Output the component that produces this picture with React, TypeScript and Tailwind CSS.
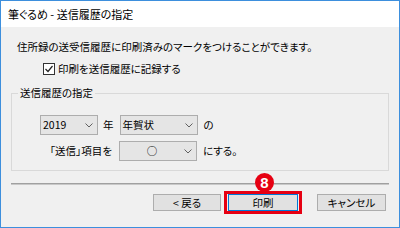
import React from "react";

const font = "font-['Noto_Sans_CJK_JP','Noto_Sans',sans-serif] [font-feature-settings:'palt']";

function Chevron() {
  return (
    <svg width="8" height="5" viewBox="0 0 8 5" className="shrink-0">
      <polyline points="0.5,0.5 4,4 7.5,0.5" fill="none" stroke="#606060" strokeWidth="1" />
    </svg>
  );
}

function Select({ value, width, center }: { value: string; width: string; center?: boolean }) {
  return (
    <div className={`${width} h-[20px] flex items-center bg-[#e5e5e5] border border-[#adadad] pr-[4px]`}>
      <span className={`flex-1 ${center ? "text-center" : "pl-[2px]"}`}>{value}</span>
      <Chevron />
    </div>
  );
}

function Button({ label, width, primary }: { label: string; width: string; primary?: boolean }) {
  return (
    <div
      className={`${width} h-[17px] flex items-center justify-center bg-[#e1e1e1] border ${
        primary ? "border-[#0078d7]" : "border-[#adadad]"
      }`}
    >
      {label}
    </div>
  );
}

export default function App() {
  return (
    <div className={`w-[400px] h-[228px] flex flex-col border border-[#3d8fdd] text-[10.5px] leading-[16px] text-black ${font}`}>
      {/* title bar */}
      <div className="h-[26px] shrink-0 bg-white flex items-center pl-[7px] text-[11px]">
        筆ぐるめ - 送信履歴の指定
      </div>

      <div className="flex-1 bg-[#f0f0f0] flex flex-col">
        <p className="mt-[12px] pl-[16px]">住所録の送受信履歴に印刷済みのマークをつけることができます。</p>

        <div className="mt-[6px] ml-[42px] flex items-center gap-[3px]">
          <div className="w-[12px] h-[12px] bg-white border border-[#333] flex items-center justify-center">
            <svg width="10" height="10" viewBox="0 0 10 10">
              <polyline points="1.5,5 4,7.5 8.5,2" fill="none" stroke="#222" strokeWidth="1.2" />
            </svg>
          </div>
          <span>印刷を送信履歴に記録する</span>
        </div>

        <fieldset className="mt-[8px] ml-[10px] w-[378px] border border-[#d9d9d9]">
          <legend className="ml-[6px] px-[2px]">送信履歴の指定</legend>
          <div className="pl-[28px] pt-[14px] pb-[9px]">
            <div className="flex items-center">
              <Select value="2019" width="w-[58px]" />
              <span className="ml-[5px]">年</span>
              <div className="ml-[6px]">
                <Select value="年賀状" width="w-[78px]" />
              </div>
              <span className="ml-[6px]">の</span>
            </div>
            <div className="mt-[6px] flex items-center">
              <span className="w-[73px] text-right pr-[1px]">「送信」項目を</span>
              <div className="ml-[6px]">
                <Select value="○" width="w-[78px]" center />
              </div>
              <span className="ml-[6px]">にする。</span>
            </div>
          </div>
        </fieldset>

        <div className="mt-[12px] ml-[10px] w-[378px] h-[2px] border-t border-[#a0a0a0] border-b border-b-[#c8c8c8]" />

        <div className="mt-[9px] flex items-center">
          <div className="ml-[152px]">
            <Button label={"<\u00a0戻る"} width="w-[68px]" />
          </div>
          <div className="ml-[7px] relative">
            <Button label="印刷" width="w-[70px]" primary />
            <div className="absolute -left-[4px] -right-[4px] -top-[3px] -bottom-[3px] border-[3px] border-[#e60012]" />
            <div className="absolute left-[27px] -top-[21px] w-[19px] h-[19px] rounded-full bg-[#e60012] flex items-center justify-center text-white font-bold text-[15px] leading-none font-['Liberation_Sans',sans-serif]">
              8
            </div>
          </div>
          <div className="ml-[19px]">
            <Button label="キャンセル" width="w-[69px]" />
          </div>
        </div>
      </div>
    </div>
  );
}
